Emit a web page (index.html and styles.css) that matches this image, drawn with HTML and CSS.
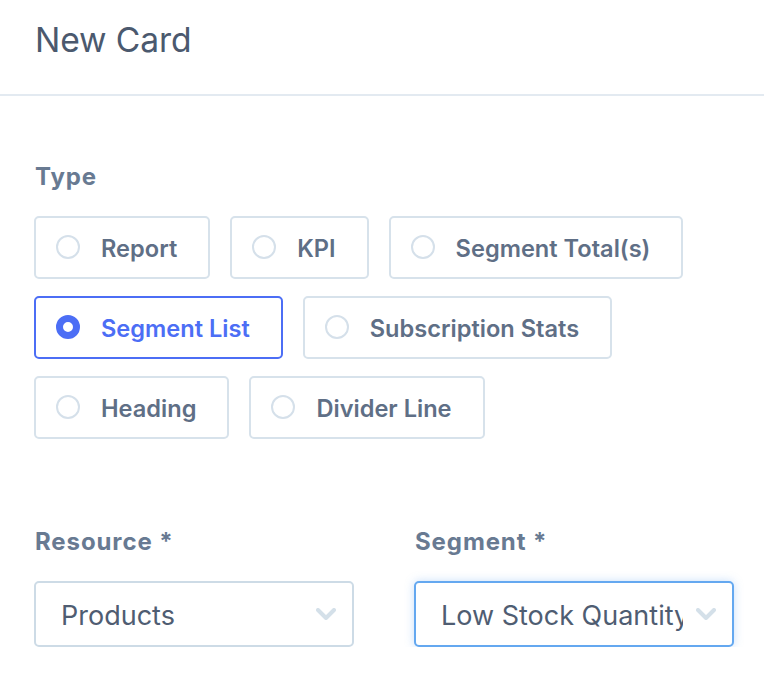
FILE: index.html
```html
<!DOCTYPE html>
<html lang="en">
<head>
<meta charset="utf-8">
<title>New Card</title>
<link rel="stylesheet" href="styles.css">
</head>
<body>
<header class="header">
  <h1 class="title">New Card</h1>
</header>
<main class="content">
  <section class="field">
    <div class="label">Type</div>
    <div class="options">
      <div class="option"><span class="radio"></span><span class="option-text">Report</span></div>
      <div class="option"><span class="radio"></span><span class="option-text">KPI</span></div>
      <div class="option"><span class="radio"></span><span class="option-text">Segment Total(s)</span></div>
      <div class="option option-selected"><span class="radio radio-on"></span><span class="option-text">Segment List</span></div>
      <div class="option"><span class="radio"></span><span class="option-text">Subscription Stats</span></div>
      <div class="option"><span class="radio"></span><span class="option-text">Heading</span></div>
      <div class="option"><span class="radio"></span><span class="option-text">Divider Line</span></div>
    </div>
  </section>
  <section class="selects">
    <div class="field">
      <div class="label">Resource *</div>
      <div class="select">
        <span class="select-text">Products</span>
        <svg class="chevron" viewBox="0 0 20 12" width="20" height="12"><path d="M2 2 L10 10 L18 2" fill="none" stroke="currentColor" stroke-width="4" stroke-linecap="round" stroke-linejoin="round"/></svg>
      </div>
    </div>
    <div class="field">
      <div class="label">Segment *</div>
      <div class="select select-focus">
        <span class="select-text">Low Stock Quantity</span>
        <svg class="chevron" viewBox="0 0 20 12" width="20" height="12"><path d="M2 2 L10 10 L18 2" fill="none" stroke="currentColor" stroke-width="4" stroke-linecap="round" stroke-linejoin="round"/></svg>
      </div>
    </div>
  </section>
</main>
</body>
</html>
```

FILE: styles.css
```css
* { box-sizing: border-box; }

body {
  margin: 0;
  background: #ffffff;
  font-family: "Inter", "Noto Sans", sans-serif;
  color: #64748b;
}

.header {
  height: 96px;
  padding: 20px 35px 0;
  border-bottom: 2px solid #e3eaf1;
}

.title {
  margin: 0;
  font-size: 33.6px;
  line-height: 40px;
  font-weight: 400;
  color: #4b596e;
  letter-spacing: -0.1px;
}

.content {
  padding: 67px 31px 0 34px;
}

.label {
  font-size: 24px;
  line-height: 28px;
  font-weight: 700;
  color: #687a92;
  letter-spacing: 0.9px;
  padding-left: 1px;
  margin-bottom: 24.5px;
}

.options {
  display: flex;
  flex-wrap: wrap;
  gap: 17px 20px;
}

.option {
  height: 63px;
  display: flex;
  align-items: center;
  gap: 21px;
  padding: 0 31px 0 20px;
  border: 2px solid #d7e2eb;
  border-radius: 5px;
  background: #fff;
}

.option-selected {
  border-color: #4c6ef5;
}

.radio {
  width: 24px;
  height: 24px;
  border-radius: 50%;
  border: 2px solid #d5e0ea;
  flex: none;
}

.radio-on {
  border: 7.5px solid #4c6ef5;
  background: #fff;
}

.option-text {
  font-size: 23.6px;
  font-weight: 600;
  color: #5f6f86;
  white-space: nowrap;
  padding-top: 3px;
}

.option-selected .option-text {
  color: #4c6ef5;
}

.selects {
  margin-top: 89px;
  display: grid;
  grid-template-columns: 320px 320px;
  column-gap: 60px;
}

.selects .label {
  margin-bottom: 25.5px;
}

.select {
  height: 66px;
  display: flex;
  align-items: center;
  padding: 0 16px 0 25px;
  border: 2px solid #cddbe6;
  border-radius: 5px;
  background: #fff;
}

.select-focus {
  border-color: #64a8f0;
  box-shadow: 0 0 10px rgba(99, 164, 240, 0.35);
}

.select-text {
  flex: 1;
  min-width: 0;
  overflow: hidden;
  white-space: nowrap;
  font-size: 27px;
  font-weight: 400;
  color: #4f5d72;
  margin-right: 13px;
  padding-top: 2px;
}

.chevron {
  flex: none;
  color: #d4e0e9;
}
```
